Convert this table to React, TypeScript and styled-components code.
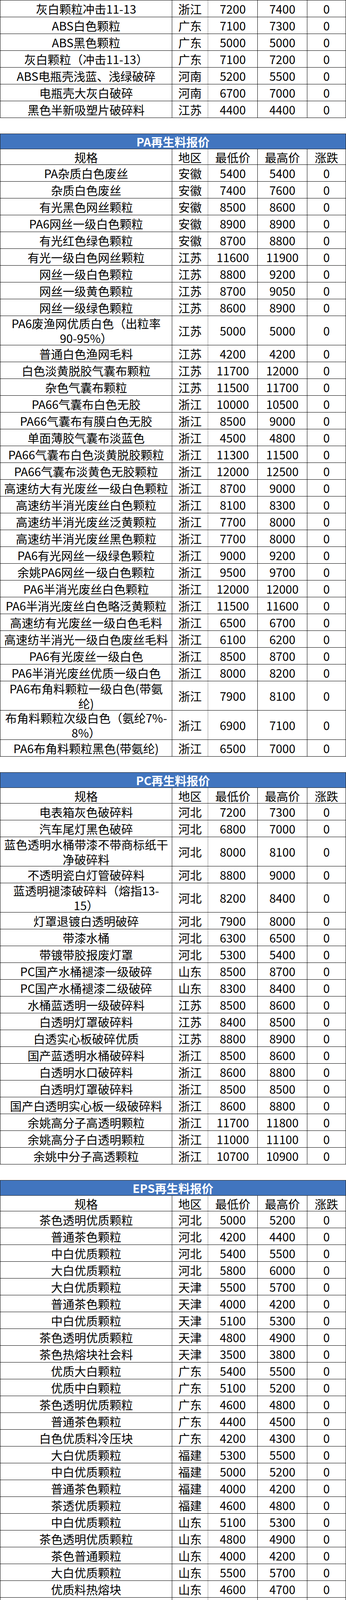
import React from 'react';
import styled, { createGlobalStyle } from 'styled-components';

type Item = [string, string, string, string, string];

const absRows: Item[] = [
    ['灰白颗粒冲击11-13', '浙江', '7200', '7400', '0'],
    ['ABS白色颗粒', '广东', '7100', '7300', '0'],
    ['ABS黑色颗粒', '广东', '5000', '5000', '0'],
    ['灰白颗粒（冲击11-13）', '广东', '7100', '7200', '0'],
    ['ABS电瓶壳浅蓝、浅绿破碎', '河南', '5200', '5500', '0'],
    ['电瓶壳大灰白破碎', '河南', '6700', '7000', '0'],
    ['黑色半新吸塑片破碎料', '江苏', '4400', '4400', '0'],
];

const paRows: Item[] = [
    ['PA杂质白色废丝', '安徽', '5400', '5400', '0'],
    ['杂质白色废丝', '安徽', '7400', '7600', '0'],
    ['有光黑色网丝颗粒', '安徽', '8500', '8600', '0'],
    ['PA6网丝一级白色颗粒', '安徽', '8900', '8900', '0'],
    ['有光红色绿色颗粒', '安徽', '8700', '8800', '0'],
    ['有光一级白色网丝颗粒', '江苏', '11600', '11900', '0'],
    ['网丝一级白色颗粒', '江苏', '8800', '9200', '0'],
    ['网丝一级黄色颗粒', '江苏', '8700', '9050', '0'],
    ['网丝一级绿色颗粒', '江苏', '8600', '8900', '0'],
    ['PA6废渔网优质白色（出粒率\n90-95%）', '江苏', '5000', '5000', '0'],
    ['普通白色渔网毛料', '江苏', '4200', '4200', '0'],
    ['白色淡黄脱胶气囊布颗粒', '江苏', '11700', '12000', '0'],
    ['杂色气囊布颗粒', '江苏', '11500', '11700', '0'],
    ['PA66气囊布白色无胶', '浙江', '10000', '10500', '0'],
    ['PA66气囊布有膜白色无胶', '浙江', '8500', '9000', '0'],
    ['单面薄胶气囊布淡蓝色', '浙江', '4500', '4800', '0'],
    ['PA66气囊布白色淡黄脱胶颗粒', '浙江', '11300', '11500', '0'],
    ['PA66气囊布淡黄色无胶颗粒', '浙江', '12000', '12500', '0'],
    ['高速纺大有光废丝一级白色颗粒', '浙江', '8700', '9000', '0'],
    ['高速纺半消光废丝白色颗粒', '浙江', '8100', '8300', '0'],
    ['高速纺半消光废丝泛黄颗粒', '浙江', '7700', '8000', '0'],
    ['高速纺半消光废丝黑色颗粒', '浙江', '7700', '8000', '0'],
    ['PA6有光网丝一级绿色颗粒', '浙江', '9000', '9200', '0'],
    ['余姚PA6网丝一级白色颗粒', '浙江', '9500', '9700', '0'],
    ['PA6半消光废丝白色颗粒', '浙江', '12000', '12000', '0'],
    ['PA6半消光废丝白色略泛黄颗粒', '浙江', '11500', '11600', '0'],
    ['高速纺有光废丝一级白色毛料', '浙江', '6500', '6700', '0'],
    ['高速纺半消光一级白色废丝毛料', '浙江', '6100', '6200', '0'],
    ['PA6有光废丝一级白色', '浙江', '8500', '8700', '0'],
    ['PA6半消光废丝优质一级白色', '浙江', '8000', '8200', '0'],
    ['PA6布角料颗粒一级白色(带氨\n纶)', '浙江', '7900', '8100', '0'],
    ['布角料颗粒次级白色（氨纶7%-\n8%）', '浙江', '6900', '7100', '0'],
    ['PA6布角料颗粒黑色(带氨纶)', '浙江', '6500', '7000', '0'],
];

const pcRows: Item[] = [
    ['电表箱灰色破碎料', '河北', '7200', '7300', '0'],
    ['汽车尾灯黑色破碎', '河北', '6800', '7000', '0'],
    ['蓝色透明水桶带漆不带商标纸干\n净破碎料', '河北', '8000', '8100', '0'],
    ['不透明瓷白灯管破碎料', '河北', '8800', '9000', '0'],
    ['蓝透明褪漆破碎料（熔指13-\n15）', '河北', '8200', '8400', '0'],
    ['灯罩退镀白透明破碎', '河北', '7900', '8000', '0'],
    ['带漆水桶', '河北', '6300', '6500', '0'],
    ['带镀带胶报废灯罩', '河北', '5300', '5400', '0'],
    ['PC国产水桶褪漆一级破碎', '山东', '8500', '8700', '0'],
    ['PC国产水桶褪漆二级破碎', '山东', '8300', '8400', '0'],
    ['水桶蓝透明一级破碎料', '江苏', '8500', '8600', '0'],
    ['白透明灯罩破碎料', '江苏', '8400', '8500', '0'],
    ['白透实心板破碎优质', '江苏', '8800', '8900', '0'],
    ['国产蓝透明水桶破碎料', '浙江', '8500', '8600', '0'],
    ['白透明水口破碎料', '浙江', '8600', '8800', '0'],
    ['白透明灯罩破碎料', '浙江', '8500', '8500', '0'],
    ['国产白透明实心板一级破碎料', '浙江', '8600', '8800', '0'],
    ['余姚高分子高透明颗粒', '浙江', '11700', '11800', '0'],
    ['余姚高分子白透明颗粒', '浙江', '11000', '11100', '0'],
    ['余姚中分子高透颗粒', '浙江', '10700', '10900', '0'],
];

const epsRows: Item[] = [
    ['茶色透明优质颗粒', '河北', '5000', '5200', '0'],
    ['普通茶色颗粒', '河北', '4200', '4400', '0'],
    ['中白优质颗粒', '河北', '5400', '5500', '0'],
    ['大白优质颗粒', '河北', '5800', '6000', '0'],
    ['大白优质颗粒', '天津', '5500', '5700', '0'],
    ['普通茶色颗粒', '天津', '4000', '4200', '0'],
    ['中白优质颗粒', '天津', '5100', '5300', '0'],
    ['茶色透明优质颗粒', '天津', '4800', '4900', '0'],
    ['茶色热熔块社会料', '天津', '3500', '3800', '0'],
    ['优质大白颗粒', '广东', '5400', '5500', '0'],
    ['优质中白颗粒', '广东', '5100', '5200', '0'],
    ['茶色透明优质颗粒', '广东', '4600', '4800', '0'],
    ['普通茶色颗粒', '广东', '4400', '4500', '0'],
    ['白色优质料冷压块', '广东', '4200', '4300', '0'],
    ['大白优质颗粒', '福建', '5300', '5500', '0'],
    ['中白优质颗粒', '福建', '5000', '5200', '0'],
    ['普通茶色颗粒', '福建', '4000', '4200', '0'],
    ['茶透优质颗粒', '福建', '4600', '4800', '0'],
    ['中白优质颗粒', '山东', '5100', '5300', '0'],
    ['茶色透明优质颗粒', '山东', '4800', '4900', '0'],
    ['茶色普通颗粒', '山东', '4000', '4200', '0'],
    ['大白优质颗粒', '山东', '5500', '5700', '0'],
    ['优质料热熔块', '山东', '4600', '4700', '0'],
    ['优质料冷压块', '山东', '3400', '3600', '0'],
    ['大白优质颗粒', '江苏', '5500', '5600', '0'],
    ['中白优质颗粒', '江苏', '5100', '5300', '0'],
    ['普通茶色颗粒', '江苏', '4000', '4200', '0'],
    ['茶色透明优质颗粒', '江苏', '4800', '4900', '0'],
    ['大白优质颗粒', '河南', '5500', '5700', '0'],
    ['茶色透明优质颗粒', '河南', '4800', '4900', '0'],
    ['中白优质颗粒', '河南', '5100', '5300', '0'],
    ['普通茶色颗粒', '河南', '4000', '4200', '0'],
];

const evaRows: Item[] = [
    ['保定EVA造粒', '河北', '5750', '5800', '0'],
    ['玉田EVA造粒', '河北', '5750', '5800', '0'],
    ['临沂EVA造粒', '山东', '6100', '6200', '0'],
    ['莒县EVA造粒', '山东', '6000', '6000', '0'],
    ['EVA白透一级颗粒', '山东', '5800', '6000', '0'],
    ['许昌EVA造粒', '河南', '5800', '6000', '0'],
];

const head: Item = ['规格', '地区', '最低价', '最高价', '涨跌'];

function Line({ item, height }: { item: Item; height: number }) {
    const [spec, area, low, high, change] = item;
    const parts = spec.split('\n');
    return (
        <Row $h={height}>
            <Cell>
                <Text $multi={parts.length > 1}>
                    {parts.map((p, i) => (
                        <React.Fragment key={i}>
                            {i > 0 && <br />}
                            {p}
                        </React.Fragment>
                    ))}
                </Text>
            </Cell>
            <Cell $soft>{area}</Cell>
            <Cell>{low}</Cell>
            <Cell>{high}</Cell>
            <Cell>{change}</Cell>
        </Row>
    );
}

function PriceBlock({ title, rows }: { title?: string; rows: Item[] }) {
    return (
        <Block $top={!title}>
            {title && (
                <>
                    <Title>{title}</Title>
                    <Line item={head} height={40} />
                </>
            )}
            {rows.map((r, i) => (
                <Line
                    key={i}
                    item={r}
                    height={r[0].includes('\n') ? 75 : 43}
                />
            ))}
        </Block>
    );
}

export default function App() {
    return (
        <Page>
            <GlobalStyle />
            <PriceBlock rows={absRows} />
            <PriceBlock title='PA再生料报价' rows={paRows} />
            <PriceBlock title='PC再生料报价' rows={pcRows} />
            <PriceBlock title='EPS再生料报价' rows={epsRows} />
            <PriceBlock title='EVA再生料报价' rows={evaRows} />
            <Note>注：表格中报价来自网络，均为不含税到厂价</Note>
        </Page>
    );
}

const GlobalStyle = createGlobalStyle`
    html, body {
        margin: 0;
        padding: 0;
    }

    body {
        background: #fff;
        font-family: 'Noto Sans CJK SC', 'Noto Sans', sans-serif;
        color: #000;
    }
`;

const Page = styled.main`
    width: 886px;
`;

const Block = styled.section<{ $top?: boolean }>`
    border-top: ${(p) => (p.$top ? '1px solid #000' : 'none')};

    & + & {
        margin-top: 40px;
    }
`;

const Title = styled.div`
    height: 40px;
    box-sizing: border-box;
    border: 1px solid #1c1c1c;
    background: #4175bf;
    color: #fff;
    font-size: 30px;
    font-weight: 700;
    line-height: 36px;
    display: flex;
    align-items: center;
    justify-content: center;
`;

const Row = styled.div<{ $h: number }>`
    display: grid;
    grid-template-columns: 440px 92px 127px 127px 99px;
    grid-template-rows: 100%;
    height: ${(p) => p.$h}px;
    box-sizing: border-box;
    overflow: visible;
    border-left: 1px solid #000;
    border-bottom: 1px solid #000;
    font-size: 30px;
    line-height: 36px;
`;

const Cell = styled.div<{ $soft?: boolean }>`
    display: flex;
    align-items: center;
    justify-content: center;
    text-align: center;
    white-space: nowrap;
    min-width: 0;
    min-height: 0;
    border-right: 1px solid ${(p) => (p.$soft ? '#8a8a8a' : '#000')};
`;

const Text = styled.span<{ $multi?: boolean }>`
    display: block;
    line-height: ${(p) => (p.$multi ? '38px' : '36px')};
`;

const Note = styled.div`
    height: 40px;
    box-sizing: border-box;
    border: 1px solid #000;
    border-top: none;
    color: #ff0000;
    font-size: 23px;
    font-style: italic;
    line-height: 30px;
    display: flex;
    align-items: center;
    justify-content: center;
`;
